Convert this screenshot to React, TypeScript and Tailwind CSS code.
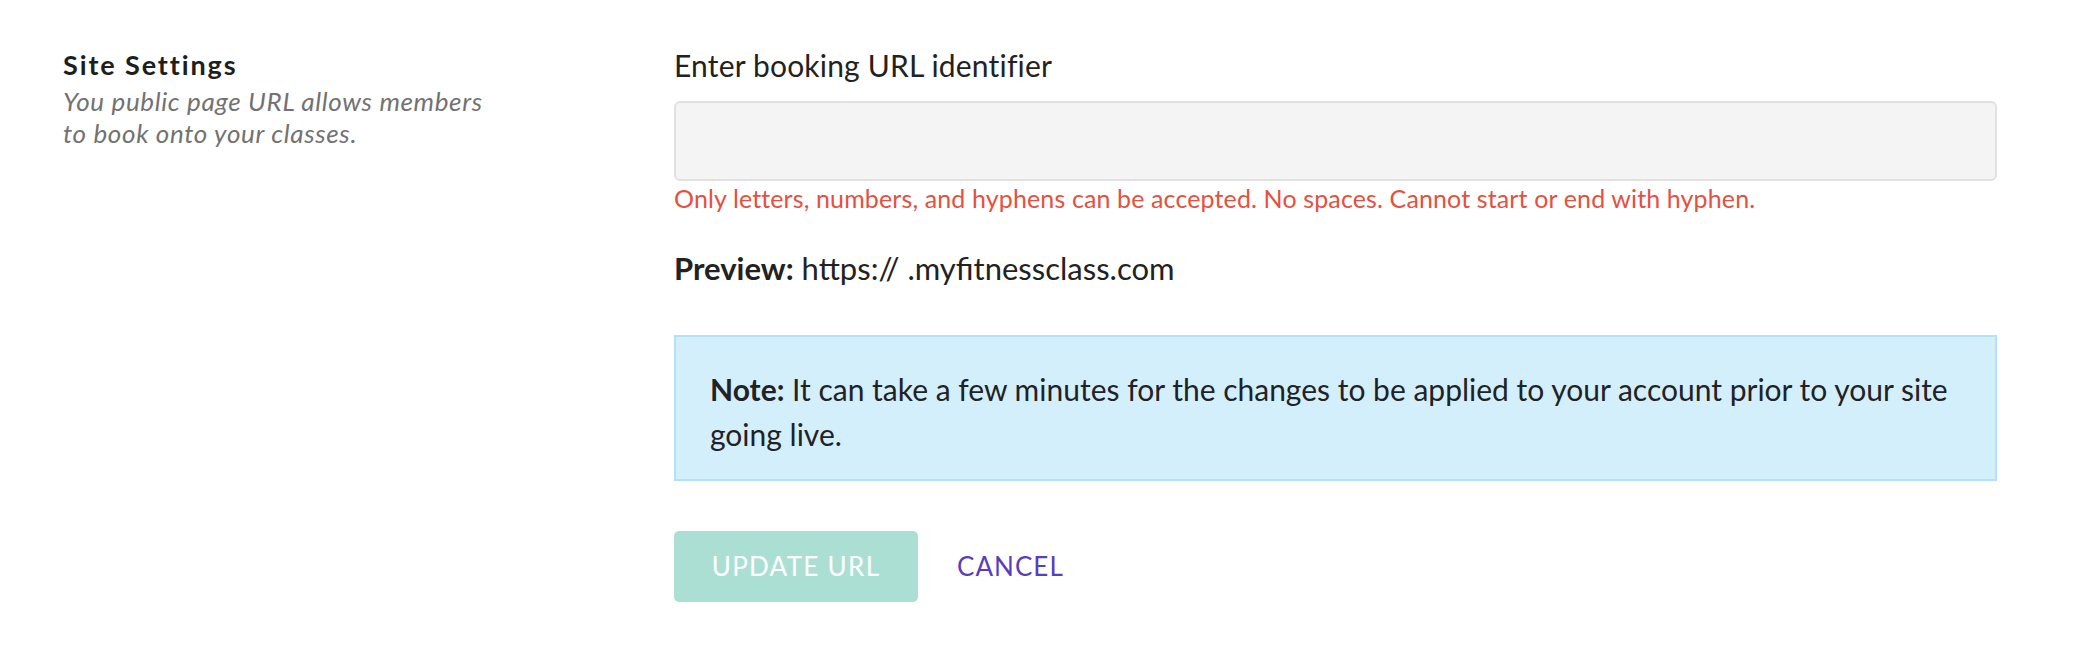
export default function App() {
  return (
    <div className="min-h-[658px] bg-white pl-[63px] pt-[48px] font-['Lato',sans-serif]">
      <div className="flex">
        {/* Left: section description */}
        <div className="w-[611px] pt-[2px]">
          <h2 className="text-[27px] leading-[30px] font-bold tracking-[0.07em] text-[#1e1e1e]">Site Settings</h2>
          <p className="mt-[5px] text-[26px] leading-[32px] italic tracking-[0.025em] text-[#727272]">
            You public page URL allows members
            <br />
            to book onto your classes.
          </p>
        </div>

        {/* Right: form */}
        <div className="w-[1323px]">
          <label className="block text-[30px] leading-[34px] tracking-[0.006em] text-[#222222]">Enter booking URL identifier</label>
          <input
            type="text"
            className="mt-[19px] block h-[80px] w-full rounded-[6px] border-2 border-[#e1e1e1] bg-[#f4f4f4] px-4 text-[28px] outline-none"
          />
          <p className="mt-[2px] text-[25px] leading-[30px] tracking-[0.005em] text-[#e5503f]">
            Only letters, numbers, and hyphens can be accepted. No spaces. Cannot start or end with hyphen.
          </p>

          <p className="mt-[38px] text-[31px] leading-[34px] text-[#222222]">
            <span className="font-bold">Preview:</span> https:// .myfitnessclass.com
          </p>

          <div className="mt-[50px] border-2 border-[#b4e1f7] bg-[#d4effc] pl-[34px] pr-[30px] pt-[30px] pb-[22px]">
            <p className="text-[30px] leading-[45px] text-[#1f2226]">
              <span className="font-bold">Note:</span> It can take a few minutes for the changes to be applied to your account prior to your site going live.
            </p>
          </div>

          <div className="mt-[50px] flex items-center">
            <button className="flex h-[71px] w-[244px] items-center justify-center rounded-[5px] bg-[#acdfd3] text-[26px] tracking-[0.05em] text-white">
              UPDATE URL
            </button>
            <button className="ml-[39px] text-[26px] tracking-[0.04em] text-[#5a3dbd]">CANCEL</button>
          </div>
        </div>
      </div>
    </div>
  );
}
